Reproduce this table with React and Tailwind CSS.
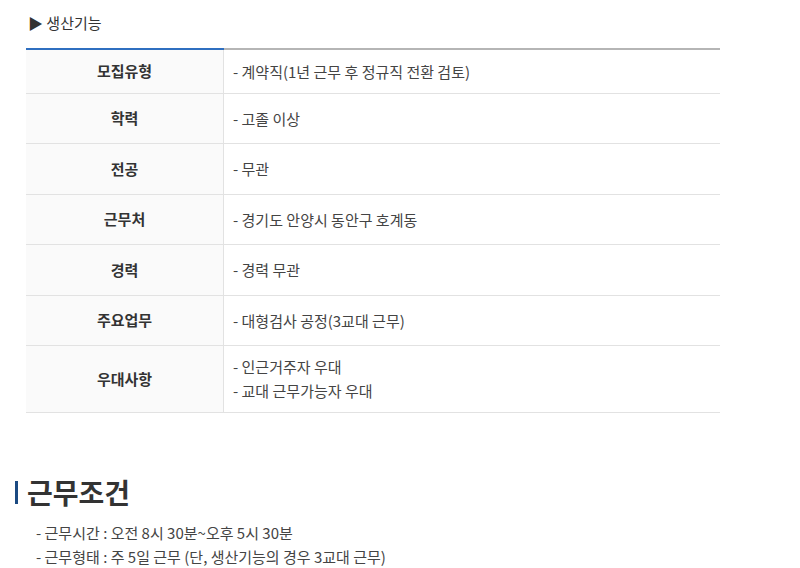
import React from 'react';

const rows = [
  { label: '모집유형', lines: ['- 계약직(1년 근무 후 정규직 전환 검토)'], h: 'h-[44px]' },
  { label: '학력', lines: ['- 고졸 이상'], h: 'h-[50px]' },
  { label: '전공', lines: ['- 무관'], h: 'h-[51px]' },
  { label: '근무처', lines: ['- 경기도 안양시 동안구 호계동'], h: 'h-[50px]' },
  { label: '경력', lines: ['- 경력 무관'], h: 'h-[51px]' },
  { label: '주요업무', lines: ['- 대형검사 공정(3교대 근무)'], h: 'h-[50px]' },
  { label: '우대사항', lines: ['- 인근거주자 우대', '- 교대 근무가능자 우대'], h: 'h-[67px]' },
];

const App = () => {
  return (
    <div
      className="w-[800px] h-[568px] overflow-hidden bg-white text-[#333]"
      style={{ fontFamily: '"Noto Sans CJK KR", "Noto Sans", sans-serif' }}
    >
      {/* 생산기능 */}
      <div className="pl-[28px] pt-[12px] h-[48px] text-[15px] text-[#333]">
        ▶ 생산기능
      </div>

      <div className="ml-[26px] w-[694px]">
        <div className="flex">
          <div className="w-[198px] h-[2px] bg-[#2f6fc0]" />
          <div className="flex-1 h-[2px] bg-[#b5b5b5]" />
        </div>
        {rows.map((row) => (
          <div key={row.label} className={`flex border-b border-[#e2e2e2] ${row.h}`}>
            <div className="w-[198px] shrink-0 bg-[#fafafa] border-r border-[#e2e2e2] flex items-center justify-center text-[15px] font-bold text-[#333]">
              {row.label}
            </div>
            <div className="flex-1 flex flex-col justify-center pl-[9px] text-[15px] text-[#444] leading-[24px]">
              {row.lines.map((l) => (
                <div key={l}>{l}</div>
              ))}
            </div>
          </div>
        ))}
      </div>

      {/* 근무조건 */}
      <div className="mt-[62px] ml-[15px] flex items-center gap-[9px]">
        <div className="w-[3px] h-[23px] bg-[#1b4a82]" />
        <div className="text-[28px] font-bold text-[#333] leading-[34px]">근무조건</div>
      </div>
      <div className="mt-[12px] ml-[36px] text-[15px] text-[#444] leading-[24px]">
        <div>- 근무시간 : 오전 8시 30분~오후 5시 30분</div>
        <div>- 근무형태 : 주 5일 근무 (단, 생산기능의 경우 3교대 근무)</div>
      </div>
    </div>
  );
};

export default App;
